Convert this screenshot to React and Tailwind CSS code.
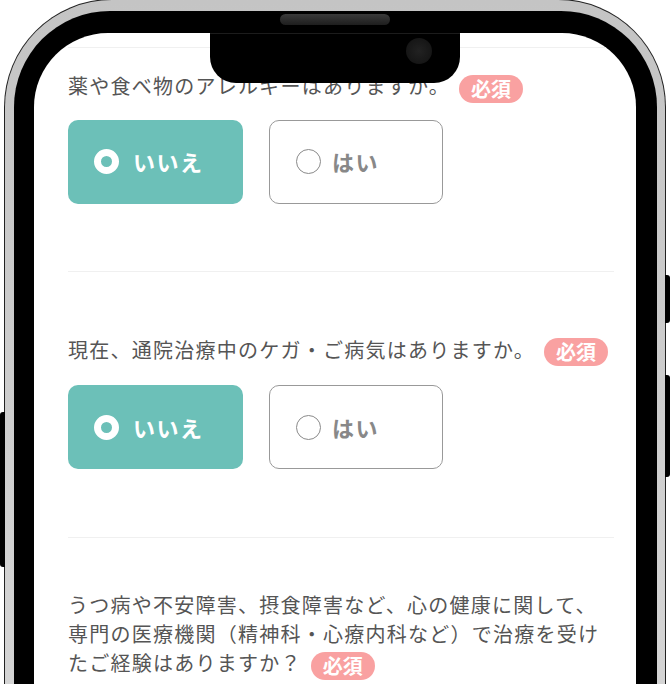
import React from 'react';

const questions = [
	{ id: 'allergy', text: '薬や食べ物のアレルギーはありますか。', first: true },
	{ id: 'treatment', text: '現在、通院治療中のケガ・ご病気はありますか。' },
];

function Badge() {
	return (
		<span className="ml-[9px] inline-block rounded-full bg-[#f9a1a1] px-[12px] align-middle text-[20px] font-bold leading-[28px] tracking-normal text-white">
			必須
		</span>
	);
}

function Choices() {
	return (
		<div className="flex gap-[26px]">
			<button className="flex h-[84px] w-[175px] items-center gap-[14px] rounded-[10px] bg-[#6cc0b8] pl-[26px]">
				<span className="h-[25px] w-[25px] rounded-full border-[7px] border-white" />
				<span className="text-[22px] font-bold tracking-[1.5px] text-white">いいえ</span>
			</button>
			<button className="flex h-[84px] w-[174px] items-center gap-[11px] rounded-[10px] border-[1.5px] border-[#999] bg-white pl-[26px]">
				<span className="h-[25px] w-[25px] rounded-full border-[1.5px] border-[#8a8a8a]" />
				<span className="text-[22px] font-bold tracking-[1.5px] text-[#888]">はい</span>
			</button>
		</div>
	);
}

export default function App() {
	return (
		<div
			className="h-[684px] w-[670px] overflow-hidden bg-white"
			style={{ fontFamily: '"Noto Sans CJK JP", "Noto Sans", sans-serif' }}
		>
			<div className="relative ml-[4px] -mt-[1px] w-[662px] rounded-t-[108px] bg-[#222] p-[1px]">
				{/* side buttons */}
				<div className="absolute left-[-4px] top-[413px] h-[155px] w-[5px] rounded-l-[3px] bg-black" />
				<div className="absolute right-[-4px] top-[276px] h-[48px] w-[5px] rounded-r-[3px] bg-black" />
				<div className="absolute right-[-4px] top-[376px] h-[102px] w-[5px] rounded-r-[3px] bg-black" />

				<div className="rounded-t-[107px] bg-gradient-to-b from-[#c4c4c4] to-[#d6d6d6] pl-[9px] pr-[8px] pt-[11px]">
					<div className="relative rounded-t-[96px] bg-black pl-[20px] pr-[21px] pt-[22px]">
						{/* speaker */}
						<div className="absolute left-[266px] top-[3px] h-[11px] w-[110px] rounded-full bg-gradient-to-b from-[#3a3a3a] to-[#1e1e1e]" />
						{/* notch */}
						<div className="absolute left-[196px] top-[22px] z-10 h-[50px] w-[250px] rounded-b-[26px] border-t border-[#1c1c1c] bg-black">
							<div className="absolute left-[196px] top-[4px] h-[26px] w-[26px] rounded-full bg-[radial-gradient(circle,#222_0%,#161616_70%)]" />
						</div>

						<div className="h-[720px] overflow-hidden rounded-t-[74px] bg-white pl-[34px] pr-[22px] text-[#555]">
							<div className="h-[15px] border-b border-[#f0f0f0]" />
							{questions.map((q) => (
								<section
									key={q.id}
									className={
										q.first
											? 'pb-[67px] pt-[23px]'
											: 'border-t border-[#f0f0f0] pb-[68px] pt-[63px]'
									}
								>
									<p
										className={
											q.first
												? 'mb-[17px] text-[20px] leading-[30px] tracking-[1.25px]'
												: 'mb-[19px] text-[20px] leading-[30px] tracking-[1.25px]'
										}
									>
										{q.text}
										<Badge />
									</p>
									<Choices />
								</section>
							))}
							<section className="border-t border-[#f0f0f0] pt-[52px]">
								<p className="text-[20px] leading-[29px] tracking-[1.25px]">
									うつ病や不安障害、摂食障害など、心の健康に関して、専門の医療機関（精神科・心療内科など）で治療を受けたご経験はありますか？
									<Badge />
								</p>
							</section>
						</div>
					</div>
				</div>
			</div>
		</div>
	);
}
